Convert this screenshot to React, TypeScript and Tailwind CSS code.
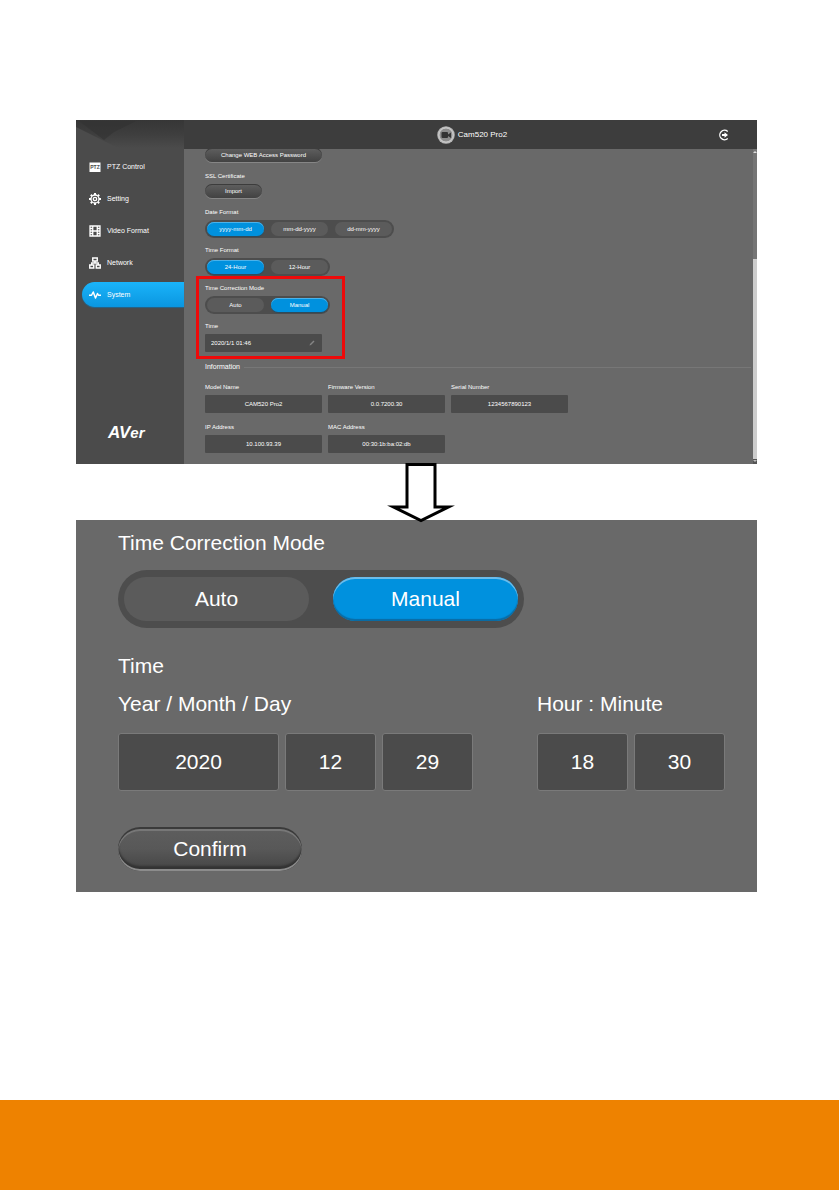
import { useId, useState } from "react";
import type { ReactNode } from "react";

const navItems: { label: string; icon: ReactNode }[] = [
  {
    label: "PTZ Control",
    icon: (
      <>
        <rect x="1" y="3" width="22" height="19" fill="#fff" />
        <text x="12" y="16" textAnchor="middle" fontSize="10" fontWeight="700" fill="#4b4b4b">
          PTZ
        </text>
      </>
    ),
  },
  {
    label: "Setting",
    icon: (
      <g fill="none" stroke="#fff" strokeWidth="2.6">
        <circle cx="12" cy="12" r="8" />
        <circle cx="12" cy="12" r="3.4" />
        <path
          strokeWidth="4"
          d="M12 4V0M12 20v4M4 12H0M20 12h4M6.3 6.3 3.6 3.6M17.7 17.7l2.7 2.7M6.3 17.7l-2.7 2.7M17.7 6.3l2.7-2.7"
        />
      </g>
    ),
  },
  {
    label: "Video Format",
    icon: (
      <g fill="none" stroke="#fff" strokeWidth="2.6">
        <path d="M2 2h20v20H2zM7.5 2v20M16.5 2v20M7.5 12h9M2 7h5.500M2 12h5.500M2 17h5.500M16.500 7H22M16.500 12H22M16.500 17H22" />
      </g>
    ),
  },
  {
    label: "Network",
    icon: (
      <g fill="none" stroke="#fff" strokeWidth="2.8">
        <path d="M7.500 2h9v6h-9zM1.500 16h8v6h-8zM14.500 16h8v6h-8zM12 8v4M5.500 16v-4h13v4" />
      </g>
    ),
  },
  {
    label: "System",
    icon: (
      <path
        d="M0 12.500h5L8.500 6l4.500 12 4-9 2 3.500h5"
        fill="none"
        stroke="#fff"
        strokeWidth="3"
        strokeLinejoin="round"
      />
    ),
  },
];

function Sidebar() {
  const [current, setCurrent] = useState("System");
  return (
    <aside className="relative flex w-[108px] shrink-0 flex-col bg-[#4b4b4b]">
      <svg className="absolute top-0 left-0 h-7 w-full" viewBox="0 0 108 28" preserveAspectRatio="none" aria-hidden="true">
        <defs>
          <linearGradient id="corner-shade" x1="0" y1="0" x2="0" y2="1">
            <stop offset="0" stopColor="#363636" />
            <stop offset="0.500" stopColor="#3e3e3e" />
            <stop offset="1" stopColor="#4b4b4b" />
          </linearGradient>
        </defs>
        <path d="M0 0h108v28H42L0 7z" fill="url(#corner-shade)" />
        <path d="M3 1h57L38 12l-10 8z" fill="#323232" opacity="0.600" />
      </svg>
      <nav className="relative flex flex-col gap-[7px] pt-[34px] pl-1.5">
        {navItems.map((item) => (
          <button
            key={item.label}
            type="button"
            aria-current={item.label === current ? "page" : undefined}
            onClick={() => setCurrent(item.label)}
            className={
              item.label === current
                ? "flex h-[25px] items-center gap-1.5 rounded-l-full bg-linear-to-b from-[#1ab4fa] to-[#0a96e0] pl-[7px] text-[7px] leading-[9px] text-white shadow-[0_1px_1px_#25648a]"
                : "flex h-[25px] items-center gap-1.5 rounded-l-full pl-[7px] text-[7px] leading-[9px] text-white"
            }
          >
            <svg className="size-3" viewBox="0 0 24 24" aria-hidden="true">
              {item.icon}
            </svg>
            {item.label}
          </button>
        ))}
      </nav>
      <div className="mt-auto pb-[21px] pl-8 text-[17px] leading-5 font-bold text-white italic">
        <span>AV</span>
        <span className="text-[15px]">er</span>
      </div>
    </aside>
  );
}

function PillButton({ children, wide }: { children: ReactNode; wide?: boolean }) {
  return (
    <button
      type="button"
      className={
        (wide ? "w-[117px]" : "w-[57px]") +
        " h-3.5 rounded-full bg-linear-to-b from-[#606060] to-[#424242] text-[6px] leading-3 text-white shadow-[inset_0_1px_0_#3c3c3c,0_1px_0_#868686]"
      }
    >
      {children}
    </button>
  );
}

function Segmented({
  label,
  options,
  initial,
  large,
}: {
  label: string;
  options: string[];
  initial: string;
  large?: boolean;
}) {
  const [value, setValue] = useState(initial);
  const id = useId();
  return (
    <div className={large ? "flex flex-col items-start gap-[15px]" : "flex flex-col items-start gap-1"}>
      <span id={id} className={large ? "text-[21px] leading-6" : "text-[6px] leading-2"}>
        {label}
      </span>
      <div
        role="group"
        aria-labelledby={id}
        className={
          large
            ? "flex h-[58px] items-center gap-6 rounded-full bg-[#4d4d4d] px-1.5"
            : "flex h-[18px] items-center gap-[7px] rounded-full bg-[#4d4d4d] px-0.5"
        }
      >
        {options.map((option) => (
          <button
            key={option}
            type="button"
            aria-pressed={option === value}
            onClick={() => setValue(option)}
            className={
              (large ? "h-11 w-[185px] text-[21px]" : "h-3.5 w-[57px] text-[6px]") +
              " rounded-full " +
              (option === value
                ? large
                  ? "bg-[#0091de] shadow-[inset_0_2px_0_#6cbcea,inset_0_-2px_1px_#0a6ba3]"
                  : "bg-[#0091de] shadow-[inset_0_1px_0_#4bb2ea,0_1px_1px_#2c4c5e]"
                : "bg-[#5b5b5b]")
            }
          >
            {option}
          </button>
        ))}
      </div>
    </div>
  );
}

function InfoField({ label, value }: { label: string; value: string }) {
  const id = useId();
  return (
    <div className="flex flex-col gap-1">
      <label htmlFor={id} className="text-[6px] leading-2">
        {label}
      </label>
      <input
        id={id}
        readOnly
        value={value}
        className="h-[18px] w-full rounded-[1px] bg-[#4b4b4b] text-center text-[6px] outline-none"
      />
    </div>
  );
}

function SystemPage() {
  const timeId = useId();
  return (
    <div className="flex min-w-0 grow overflow-hidden bg-[#696969]">
      <div className="-mt-px min-w-0 grow pb-[11px] pl-[21px]">
        <div className="flex flex-col items-start gap-2.5">
          <PillButton wide>Change WEB Access Password</PillButton>
          <div className="flex flex-col items-start gap-1">
            <span className="text-[6px] leading-2">SSL Certificate</span>
            <PillButton>Import</PillButton>
          </div>
          <div className="flex flex-col items-start gap-2">
            <Segmented label="Date Format" options={["yyyy-mm-dd", "mm-dd-yyyy", "dd-mm-yyyy"]} initial="yyyy-mm-dd" />
            <Segmented label="Time Format" options={["24-Hour", "12-Hour"]} initial="24-Hour" />
            <div className="relative flex flex-col items-start gap-2">
              <Segmented label="Time Correction Mode" options={["Auto", "Manual"]} initial="Manual" />
              <div className="flex flex-col gap-1">
                <label htmlFor={timeId} className="text-[6px] leading-2">
                  Time
                </label>
                <div className="flex h-[18px] w-[117px] items-center rounded-[1px] bg-[#4b4b4b] px-1.5">
                  <input
                    id={timeId}
                    defaultValue="2020/1/1 01:46"
                    className="min-w-0 grow bg-transparent text-[6px] outline-none"
                  />
                  <svg className="size-2" viewBox="0 0 16 16" aria-hidden="true">
                    <path d="m3 13 1-3 7-7 2 2-7 7z" fill="#858585" />
                  </svg>
                </div>
              </div>
              <div className="pointer-events-none absolute -top-2 -bottom-[7px] -left-[9px] w-[149px] border-3 border-[#ee0a0a]" />
            </div>
          </div>
        </div>
        <div className="mt-[11px] flex items-center gap-1 pr-0.5">
          <h2 className="text-[7px] leading-2">Information</h2>
          <div className="h-px grow bg-[#777]" />
        </div>
        <div className="mt-3 grid grid-cols-[repeat(3,117px)] gap-x-1.5 gap-y-2.5">
          <InfoField label="Model Name" value="CAM520 Pro2" />
          <InfoField label="Firmware Version" value="0.0.7200.30" />
          <InfoField label="Serial Number" value="1234567890123" />
          <InfoField label="IP Address" value="10.100.93.39" />
          <InfoField label="MAC Address" value="00:30:1b:ba:02:db" />
        </div>
      </div>
      <div className="flex w-1 shrink-0 flex-col bg-[#757575]" aria-hidden="true">
        <svg className="h-[5px] w-1" viewBox="0 0 4 5">
          <path d="M0 4 2 2l2 2z" fill="#ddd" />
        </svg>
        <div className="mt-auto h-[200px] bg-[#cdcdcd]" />
        <svg className="h-[5px] w-1" viewBox="0 0 4 5">
          <path d="M0 0h4v5H0z" fill="#555" />
          <path d="M0 1h4L2 3z" fill="#bbb" />
        </svg>
      </div>
    </div>
  );
}

function CameraConsole() {
  return (
    <section className="flex bg-[#696969] text-white">
      <Sidebar />
      <div className="flex min-w-0 grow flex-col">
        <header className="flex h-[29px] items-center bg-[#3d3d3d] pr-[27px]">
          <div className="flex grow items-center justify-center gap-[3px] pl-[42px]">
            <svg className="size-[18px]" viewBox="0 0 36 36" aria-hidden="true">
              <circle cx="18" cy="18" r="17.500" fill="#b9b9b9" />
              <circle cx="18" cy="18" r="14" fill="#8c8c8c" stroke="#ddd" strokeWidth="1.500" />
              <rect x="9" y="12" width="13" height="12" rx="2" fill="#333" />
              <path d="m22 17 6-4v11l-6-4z" fill="#333" />
            </svg>
            <h1 className="text-[8px]">Cam520 Pro2</h1>
          </div>
          <button type="button" aria-label="Log out">
            <svg className="size-3" viewBox="0 0 24 24" aria-hidden="true">
              <path d="M19.500 5a9.500 9.500 0 1 0 0 14" fill="none" stroke="#fff" strokeWidth="2.600" />
              <path d="M8 10h5V6.500l7 5.500-7 5.500V14H8z" fill="#fff" />
            </svg>
          </button>
        </header>
        <SystemPage />
      </div>
    </section>
  );
}

function NumberBox({ label, value, wide }: { label: string; value: string; wide?: boolean }) {
  return (
    <input
      aria-label={label}
      defaultValue={value}
      className={
        (wide ? "w-[161px]" : "w-[91px]") +
        " h-[58px] rounded-[3px] border border-[#7a7a7a] bg-[#4b4b4b] text-center text-[21px] outline-none"
      }
    />
  );
}

function TimeEditor() {
  return (
    <section className="bg-[#696969] pt-[11px] pb-[21px] pl-[42px] text-[21px] leading-6 text-white">
      <Segmented label="Time Correction Mode" options={["Auto", "Manual"]} initial="Manual" large />
      <h2 className="mt-[26px]">Time</h2>
      <div className="mt-3.5 flex gap-16">
        <fieldset>
          <legend>Year / Month / Day</legend>
          <div className="mt-[17px] flex gap-1.5">
            <NumberBox label="Year" value="2020" wide />
            <NumberBox label="Month" value="12" />
            <NumberBox label="Day" value="29" />
          </div>
        </fieldset>
        <fieldset>
          <legend>Hour : Minute</legend>
          <div className="mt-[17px] flex gap-1.5">
            <NumberBox label="Hour" value="18" />
            <NumberBox label="Minute" value="30" />
          </div>
        </fieldset>
      </div>
      <button
        type="button"
        className="mt-9 block h-11 w-[184px] rounded-full bg-linear-to-b from-[#5e5e5e] from-0% via-[#585858] via-50% to-[#444] to-100% shadow-[inset_0_2px_0_#3a3a3a,inset_0_4px_0_#777,inset_0_-2px_0_#8c8c8c,inset_0_-5px_2px_#333]"
      >
        Confirm
      </button>
    </section>
  );
}

export default function App() {
  return (
    <div className="flex min-h-screen flex-col bg-white font-['Liberation_Sans',Arial,sans-serif]">
      <main className="grow pt-[120px] pr-[83px] pl-[76px]">
        <CameraConsole />
        <div className="relative z-10 flex h-14 justify-center pl-2">
          <svg className="-mt-0.5 h-[62px] w-[72px] shrink-0" viewBox="0 0 72 62" aria-hidden="true">
            <path
              d="M22 2.500h28v42.500h13.500L36 58.500 8.500 45H22z"
              fill="#fff"
              stroke="#000"
              strokeWidth="3"
              strokeMiterlimit="10"
            />
          </svg>
        </div>
        <TimeEditor />
      </main>
      <footer className="mr-px h-[90px] bg-[#ee8200]" />
    </div>
  );
}
